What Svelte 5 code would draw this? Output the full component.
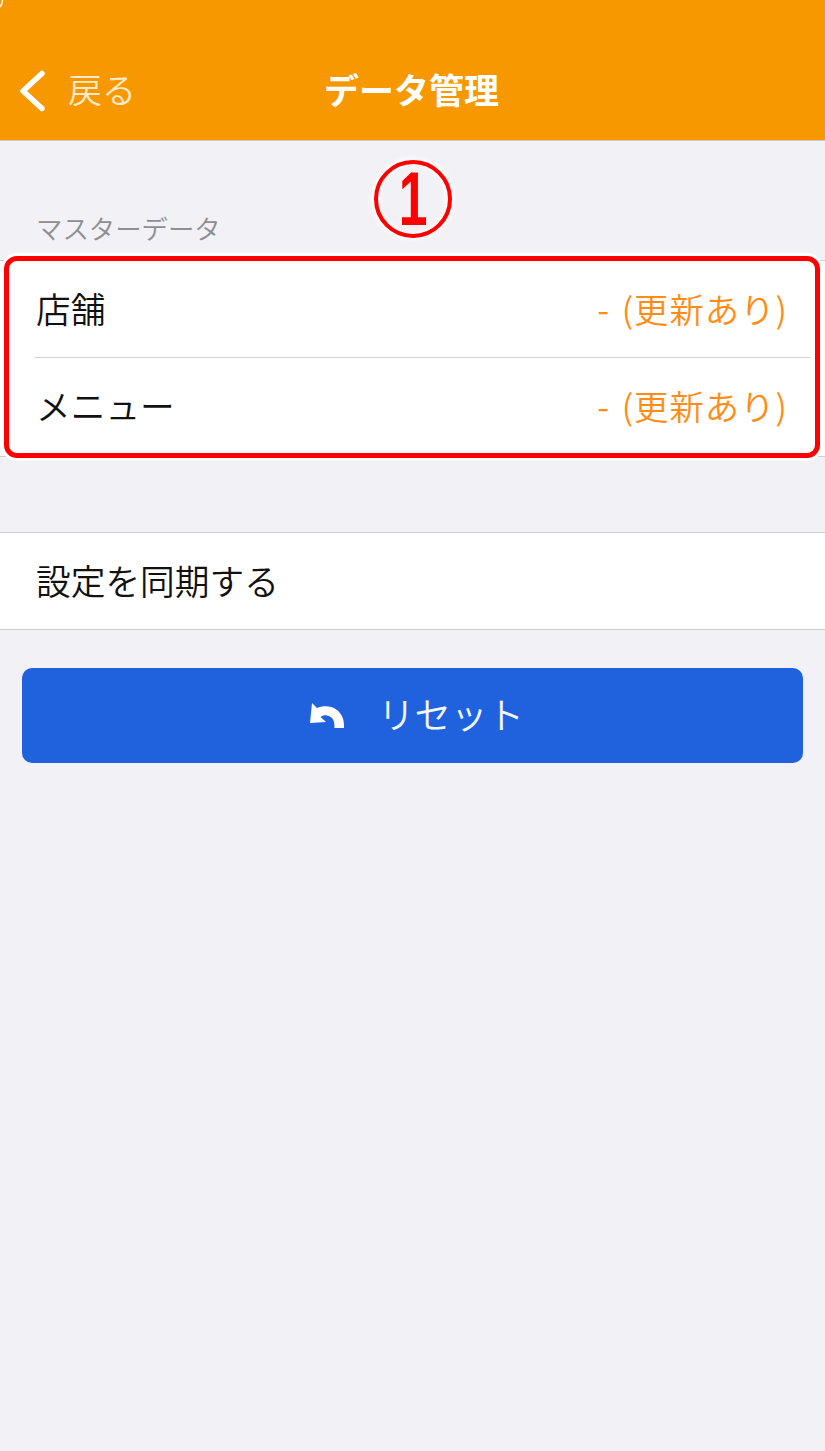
<script>
  const rows = [
    { name: '店舗', status: '- (更新あり)' },
    { name: 'メニュー', status: '- (更新あり)' }
  ];
</script>

<div class="page">
  <header class="nav">
    <svg class="corner" viewBox="0 0 4 9" width="4" height="9" aria-hidden="true">
      <path d="M2.500 0 C2.500 3 1.500 5 0 7" fill="none" stroke="#fff" stroke-width="1.500" />
    </svg>
    <div class="back">
      <svg class="chev" viewBox="0 0 28 42" width="28" height="42" aria-hidden="true">
        <path d="M24 3.500 L5 21 L24 38.500" fill="none" stroke="#fff" stroke-width="5.500" stroke-linecap="round" stroke-linejoin="round" />
      </svg>
      <span>戻る</span>
    </div>
    <h1>データ管理</h1>
  </header>

  <div class="label">マスターデータ</div>

  <section class="list master">
    {#each rows as row}
      <div class="row">
        <span class="name">{row.name}</span>
        <span class="status">{row.status}</span>
      </div>
    {/each}
    <div class="mark"></div>
  </section>

  <section class="list sync">
    <div class="row"><span class="name">設定を同期する</span></div>
  </section>

  <button class="reset">
    <svg viewBox="0 0 36 28" width="36" height="28" aria-hidden="true">
      <path d="M3 1 L1 21 L17 20 L11.500 15 C15 12 20 13 23 16 C25 18.500 25.500 21 25.500 26 L35 26 C35.500 18 33 12 28 8 C22 3.500 14 3.500 8 6 Z" fill="#fff" />
    </svg>
    <span>リセット</span>
  </button>

  <div class="num"><span>1</span></div>
</div>

<style>
  :global(body) {
    margin: 0;
    background: #f1f1f6;
  }
  .page {
    position: relative;
    width: 825px;
    height: 1451px;
    overflow: hidden;
    background: #f1f1f6;
    font-family: "Noto Sans CJK JP", "Noto Sans", sans-serif;
    font-weight: 350;
    color: #111;
  }
  .nav {
    position: relative;
    box-sizing: border-box;
    height: 141px;
    background: #f79800;
    border-bottom: 1px solid #c9c9d2;
    display: flex;
    align-items: flex-end;
    justify-content: center;
    padding-bottom: 26px;
    color: #fff;
  }
  .corner {
    position: absolute;
    left: 0;
    top: 0;
  }
  .back {
    position: absolute;
    left: 18px;
    bottom: 28px;
    display: flex;
    align-items: center;
    gap: 22px;
    font-size: 34px;
    line-height: 46px;
    color: #fdeacb;
  }
  .chev {
    flex: none;
    margin-top: 4px;
  }
  h1 {
    margin: 0 2px 0 0;
    font-size: 35px;
    line-height: 50px;
    font-weight: 700;
  }
  .label {
    margin: 68px 0 0 36px;
    height: 51px;
    font-size: 26.400px;
    line-height: 37px;
    color: #8e8e93;
  }
  .list {
    background: #fff;
    border-top: 1px solid #cfcfd3;
    border-bottom: 1px solid #cfcfd3;
  }
  .master {
    position: relative;
    height: 195px;
  }
  .master .row {
    box-sizing: border-box;
    height: 97px;
    margin: 0 15px 0 35px;
    padding: 0 22px 0 1px;
  }
  .master .row:first-child {
    border-bottom: 1px solid #d2d2d4;
  }
  .mark {
    position: absolute;
    left: 4px;
    right: 5px;
    top: -5px;
    bottom: -2px;
    border: 5.500px solid #ff0000;
    border-radius: 13px;
    box-shadow: 0 0 0 3px #fff;
    pointer-events: none;
  }
  .row {
    display: flex;
    align-items: center;
    justify-content: space-between;
  }
  .name {
    margin-bottom: 3px;
    font-size: 34.700px;
    line-height: 48px;
    color: #111;
  }
  .status {
    margin-bottom: 3px;
    font-size: 34.400px;
    line-height: 48px;
    letter-spacing: 1px;
    word-spacing: 3px;
    color: #ff8c14;
  }
  .sync {
    margin-top: 75px;
    height: 96px;
  }
  .sync .row {
    height: 96px;
    padding-left: 36px;
  }
  .reset {
    display: flex;
    align-items: center;
    justify-content: center;
    gap: 33px;
    box-sizing: border-box;
    width: 781px;
    height: 95px;
    margin: 38px 0 0 22px;
    padding: 0 0 0 8px;
    border: none;
    border-radius: 10px;
    background: #2062de;
    color: #f2f6ff;
    font-family: inherit;
    font-weight: 350;
    font-size: 36.500px;
  }
  .reset span {
    margin-bottom: 4px;
  }
  .num {
    position: absolute;
    left: 374px;
    top: 160px;
    box-sizing: border-box;
    width: 78px;
    height: 78px;
    border: 4px solid #ff0000;
    border-radius: 50%;
    box-shadow: 0 0 6px 2px rgba(255, 255, 255, 0.9), inset 0 0 6px 2px rgba(255, 255, 255, 0.7);
    display: flex;
    align-items: center;
    justify-content: center;
    font-family: "Liberation Sans", sans-serif;
    font-size: 76px;
    font-weight: 700;
    line-height: 70px;
    color: #ff0000;
  }
  .num span {
    display: inline-block;
    transform: scaleX(0.68);
  }
</style>
